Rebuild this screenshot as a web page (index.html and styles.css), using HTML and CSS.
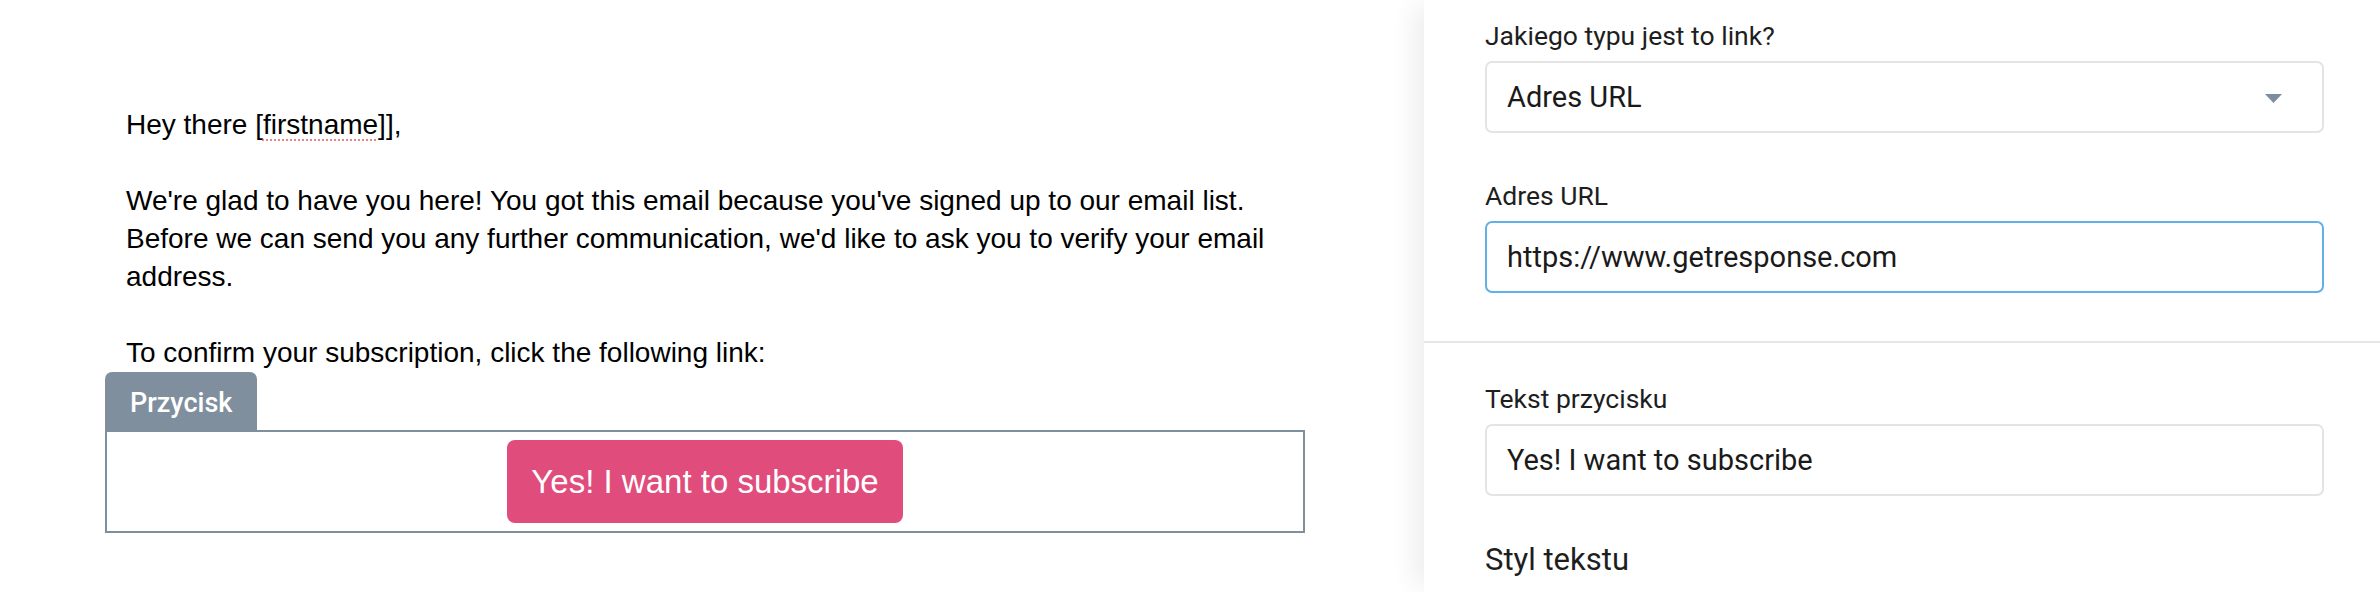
FILE: index.html
```html
<!DOCTYPE html>
<html lang="pl">
<head>
<meta charset="utf-8">
<title>Edytor</title>
<link rel="stylesheet" href="styles.css">
</head>
<body>
<div class="app">
  <main class="canvas">
    <div class="email">
      <div class="copy">
        <p>Hey there [<span class="spell">firstname</span>]],</p>
        <p>We're glad to have you here! You got this email because you've signed up to our email list. Before we can send you any further communication, we'd like to ask you to verify your email address.</p>
        <p class="last">To confirm your subscription, click the following link:</p>
      </div>
      <div class="block">
        <div class="tab">Przycisk</div>
        <div class="frame">
          <a class="cta">Yes! I want to subscribe</a>
        </div>
      </div>
    </div>
  </main>
  <aside class="panel">
    <section class="section first">
      <div class="label">Jakiego typu jest to link?</div>
      <div class="field select">
        <span>Adres URL</span>
        <svg class="caret" width="17" height="9" viewBox="0 0 17 9"><path d="M0 0H17L8.5 9Z" fill="#7d8d9c"/></svg>
      </div>
      <div class="label spaced">Adres URL</div>
      <div class="field focus"><span>https://www.getresponse.com</span></div>
    </section>
    <section class="section second">
      <div class="label">Tekst przycisku</div>
      <div class="field"><span>Yes! I want to subscribe</span></div>
      <h3 class="heading">Styl tekstu</h3>
    </section>
  </aside>
</div>
</body>
</html>
```

FILE: styles.css
```css
html, body {
  margin: 0;
  padding: 0;
  background: #ffffff;
}
body {
  width: 2380px;
  height: 592px;
  overflow: hidden;
}
.app {
  display: flex;
  height: 592px;
}
.canvas {
  flex: 1;
  background: #ffffff;
  font-family: "Liberation Sans", Arial, sans-serif;
  color: #000;
}
.email {
  margin-left: 105px;
  width: 1200px;
  padding-top: 106px;
}
.copy {
  padding: 0 21px;
  font-size: 28px;
  line-height: 38px;
}
.copy p {
  margin: 0 0 38px 0;
}
.copy p.last {
  margin-bottom: 0;
}
.spell {
  text-decoration: underline dotted rgba(226, 90, 90, 0.75);
  text-decoration-thickness: 2px;
  text-underline-offset: 5px;
}
.block {
  display: flex;
  flex-direction: column;
  align-items: flex-start;
}
.tab {
  box-sizing: border-box;
  height: 58px;
  padding: 4px 25px 0;
  line-height: 54px;
  background: #7f8f9e;
  color: #fff;
  font-family: Roboto, "Liberation Sans", sans-serif;
  font-weight: 500;
  font-size: 27px;
  border-radius: 7px 7px 0 0;
}
.frame {
  box-sizing: border-box;
  width: 1200px;
  height: 103px;
  border: 2px solid #7f8f9e;
  padding: 8px;
  display: flex;
  justify-content: center;
}
.cta {
  display: block;
  height: 83px;
  line-height: 83px;
  padding: 0 24px;
  background: #e04c7c;
  color: #fff;
  font-size: 33px;
  border-radius: 8px;
}
.panel {
  width: 956px;
  flex: none;
  background: #fff;
  box-shadow: -16px 0 24px -6px rgba(0, 0, 0, 0.07);
  font-family: Roboto, "Liberation Sans", sans-serif;
  color: #1e1e1e;
  position: relative;
}
.section {
  padding: 0 56px 0 61px;
}
.section.first {
  padding-top: 21px;
  padding-bottom: 48px;
  border-bottom: 2px solid #e6e6e6;
}
.section.second {
  padding-top: 41px;
}
.label {
  font-size: 26.5px;
  line-height: 30px;
  margin-bottom: 10px;
}
.label.spaced {
  margin-top: 48px;
}
.field {
  box-sizing: border-box;
  height: 72px;
  border: 2px solid #e4e4e4;
  border-radius: 7px;
  padding: 0 20px;
  display: flex;
  align-items: center;
  justify-content: space-between;
  font-size: 29px;
  color: #1a1a1a;
}
.field.focus {
  border-color: #62b0e8;
}
.select .caret {
  margin-right: 20px;
  margin-top: 2px;
}
.heading {
  margin: 46px 0 0 0;
  font-size: 31px;
  font-weight: 400;
  line-height: 36px;
  color: #1e1e1e;
}
```
